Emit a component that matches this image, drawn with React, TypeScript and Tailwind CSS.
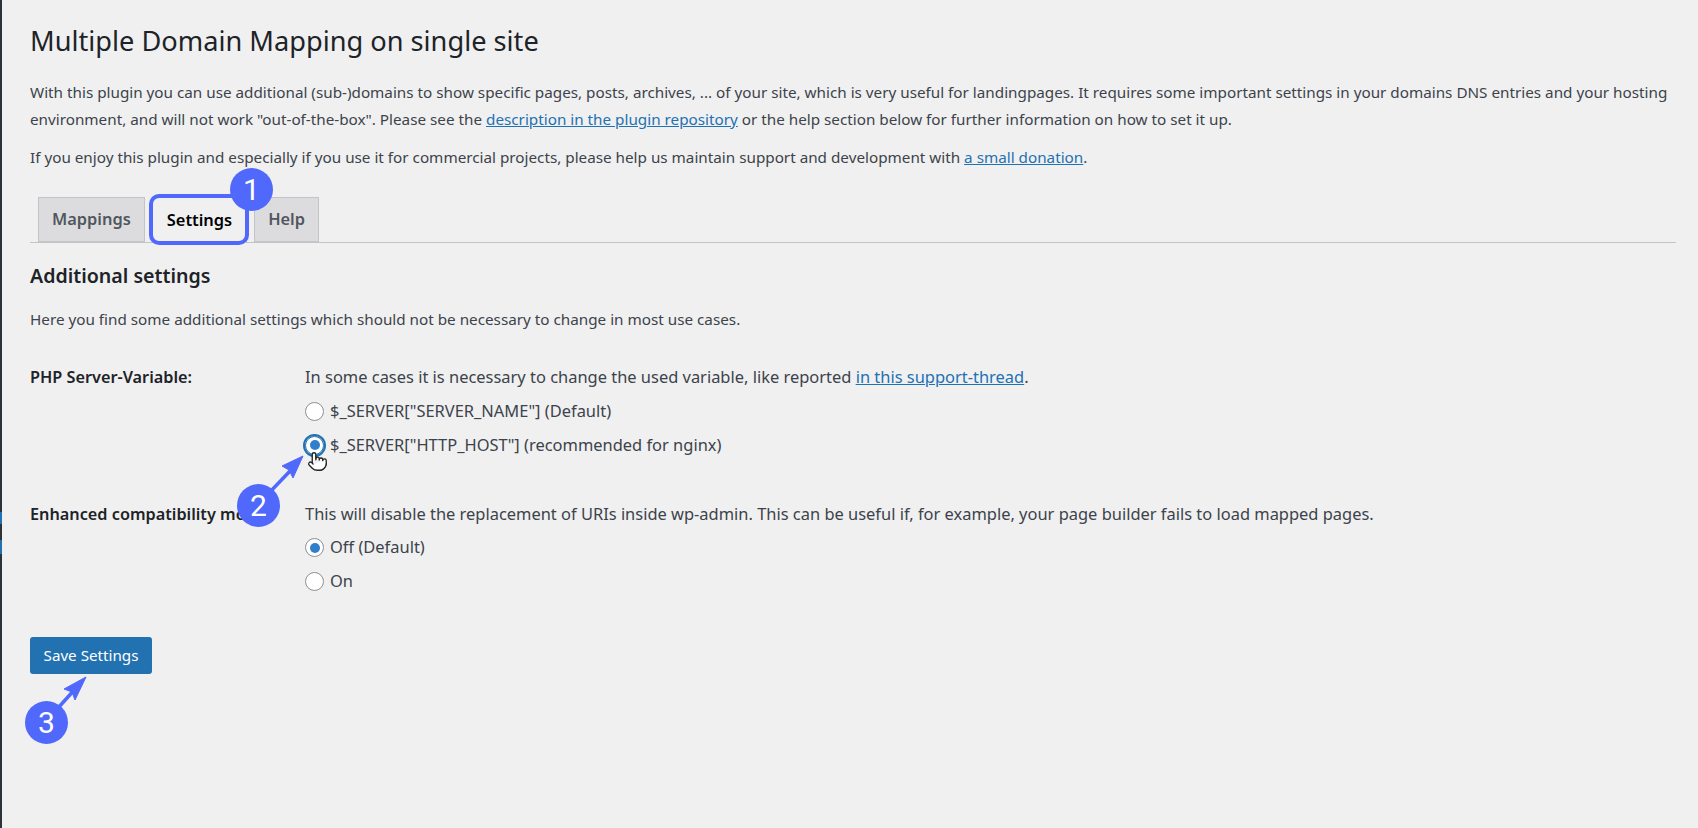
import { Pointer } from "lucide-react";

function Radio({ label, checked, focus }: { label: string; checked?: boolean; focus?: boolean }) {
	return (
		<div className="flex h-[33.5px] items-center gap-[6px]">
			<span
				className={`flex h-[19px] w-[19px] shrink-0 items-center justify-center rounded-full bg-white border border-[#8c8f94] ${focus ? "outline-[2px] outline-[#2271b1] border-[#2271b1]" : ""}`}
			>
				{checked && <span className="h-[10px] w-[10px] rounded-full bg-[#2f7fca]" />}
			</span>
			<span>{label}</span>
		</div>
	);
}

function Badge({ n, className }: { n: number; className: string }) {
	return (
		<div
			className={`absolute flex h-[43px] w-[43px] items-center justify-center rounded-full bg-[#5068fb] text-[30px] text-white font-['Roboto',sans-serif] ${className}`}
		>
			{n}
		</div>
	);
}

export default function App() {
	return (
		<div className="relative h-screen overflow-hidden bg-[#f0f0f1] text-[15.25px] text-[#3c434a] font-['Noto_Sans',sans-serif]">
			<div className="absolute left-0 top-0 h-full w-[2px] bg-[#2c3338]">
				<div className="mt-[512px] h-[12px] bg-[#2271b1]" />
				<div className="mt-[16px] h-[14px] bg-[#2271b1]" />
			</div>

			<div className="pl-[30px] pr-[22px] pt-[22px]">
				<h1 className="text-[27.2px] leading-[38px] text-[#1d2327]">Multiple Domain Mapping on single site</h1>
				<p className="mt-[19px] leading-[27px]">
					With this plugin you can use additional (sub-)domains to show specific pages, posts, archives, ... of your site, which is very useful for landingpages. It requires some important settings in your domains DNS entries and your hosting
					<br />
					environment, and will not work "out-of-the-box". Please see the{" "}
					<a className="text-[#2271b1] underline">description in the plugin repository</a> or the help section below for further information on how to set it up.
				</p>
				<p className="mt-[11px] leading-[27px]">
					If you enjoy this plugin and especially if you use it for commercial projects, please help us maintain support and development with{" "}
					<a className="text-[#2271b1] underline">a small donation</a>.
				</p>

				<div className="mt-[26px] flex h-[46px] gap-[7px] border-b border-[#c3c4c7] pl-[8px] text-[16.4px] font-semibold">
					<div className="flex h-[45px] items-center border border-[#c3c4c7] bg-[#dcdcde] px-[13px] text-[#50575e]">Mappings</div>
					<div className="flex h-[46px] items-center border border-b-0 border-[#c3c4c7] bg-[#f0f0f1] px-[14px] text-black">Settings</div>
					<div className="flex h-[45px] items-center border border-[#c3c4c7] bg-[#dcdcde] px-[13px] text-[#50575e]">Help</div>
				</div>

				<h2 className="mt-[19px] text-[19.6px] font-semibold leading-[28px] text-[#1d2327]">Additional settings</h2>
				<p className="mt-[16px] leading-[27px]">Here you find some additional settings which should not be necessary to change in most use cases.</p>

				<div className="mt-[30px] grid grid-cols-[275px_1fr] text-[16.45px]">
					<div className="text-[16.25px] font-semibold leading-[28px] text-[#1d2327]">PHP Server-Variable:</div>
					<div>
						<div className="leading-[28px]">
							In some cases it is necessary to change the used variable, like reported{" "}
							<a className="text-[#2271b1] underline">in this support-thread</a>.
						</div>
						<div className="mt-[4px]">
							<Radio label={'$_SERVER["SERVER_NAME"] (Default)'} />
							<Radio label={'$_SERVER["HTTP_HOST"] (recommended for nginx)'} checked focus />
						</div>
					</div>

					<div className="mt-[38px] whitespace-nowrap text-[16.25px] font-semibold leading-[28px] text-[#1d2327]">Enhanced compatibility mode:</div>
					<div className="mt-[38px]">
						<div className="leading-[28px]">
							This will disable the replacement of URIs inside wp-admin. This can be useful if, for example, your page builder fails to load mapped pages.
						</div>
						<div className="mt-[3px]">
							<Radio label="Off (Default)" checked />
							<Radio label="On" />
						</div>
					</div>
				</div>

				<button className="mt-[39px] h-[37px] w-[122px] rounded-[3px] bg-[#2271b1] text-[15.2px] text-white">Save Settings</button>
			</div>

			{/* annotations */}
			<div className="absolute left-[149px] top-[194px] h-[51px] w-[100px] rounded-[10px] border-[4px] border-[#5068fb]" />
			<Badge n={1} className="left-[230px] top-[168px]" />
			<Badge n={2} className="left-[237px] top-[484px]" />
			<Badge n={3} className="left-[25px] top-[701px]" />
			<Pointer className="absolute left-[307px] top-[451px] h-[21px] w-[21px] fill-white stroke-[#222]" strokeWidth={1.5} />
			<svg className="pointer-events-none absolute left-0 top-0" width="1698" height="828">
				<g fill="#5068fb" stroke="#5068fb">
					<line x1="268" y1="494" x2="291" y2="470" strokeWidth="3.5" />
					<polygon points="303,456 293,478 289,470 282,466" />
					<line x1="58" y1="708" x2="76" y2="688" strokeWidth="3.5" />
					<polygon points="86,677 75,700 72,692 64,689" />
				</g>
			</svg>
		</div>
	);
}
